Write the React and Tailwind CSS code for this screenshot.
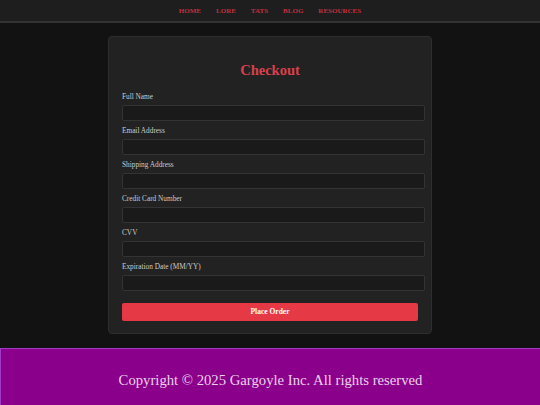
import React from "react";

const serif = { fontFamily: '"Liberation Serif", "DejaVu Serif", serif' };

function Field({ label }) {
  return (
    <div className="mb-[6px]">
      <label className="block text-[7.3px] leading-[8px] text-[#cccccc] mb-[4px]">{label}</label>
      <div className="w-[303px] h-[16px] bg-[#1a1a1a] border border-[#333333] rounded-[2px]" />
    </div>
  );
}

export default function App() {
  const nav = ["HOME", "LORE", "TATS", "BLOG", "RESOURCES"];
  const fields = [
    "Full Name",
    "Email Address",
    "Shipping Address",
    "Credit Card Number",
    "CVV",
    "Expiration Date (MM/YY)",
  ];
  return (
    <div className="w-[540px] h-[405px] overflow-hidden bg-[#121212] flex flex-col" style={serif}>
      <header className="h-[23px] shrink-0 bg-[#1e1e1e] border-b-2 border-[#333333] flex items-center justify-center gap-[15px] pt-[1px]">
        {nav.map((n) => (
          <span key={n} className="text-[7px] font-bold text-[#c0303f] leading-none">{n}</span>
        ))}
      </header>
      <main className="pt-[13px] flex justify-center shrink-0">
        <div className="w-[324px] h-[298px] bg-[#222222] border border-[#2e2e2e] rounded-[4px] px-[13px] pt-[13px]">
          <h2 className="mt-[12px] mb-[15px] text-center text-[14.5px] leading-[16px] font-bold text-[#d9404c]">Checkout</h2>
          {fields.map((f) => (
            <Field key={f} label={f} />
          ))}
          <button className="mt-[6px] w-[296px] h-[18px] bg-[#e63946] rounded-[2px] text-white text-[7.5px] font-bold">
            Place Order
          </button>
        </div>
      </main>
      <footer className="mt-[14px] flex-1 bg-[#8b008b] border-t border-l border-[#a03cc8] flex justify-center pt-[23px]">
        <p className="text-[14.7px] leading-[17px] text-[#ecd2ec]">Copyright © 2025 Gargoyle Inc. All rights reserved</p>
      </footer>
    </div>
  );
}
